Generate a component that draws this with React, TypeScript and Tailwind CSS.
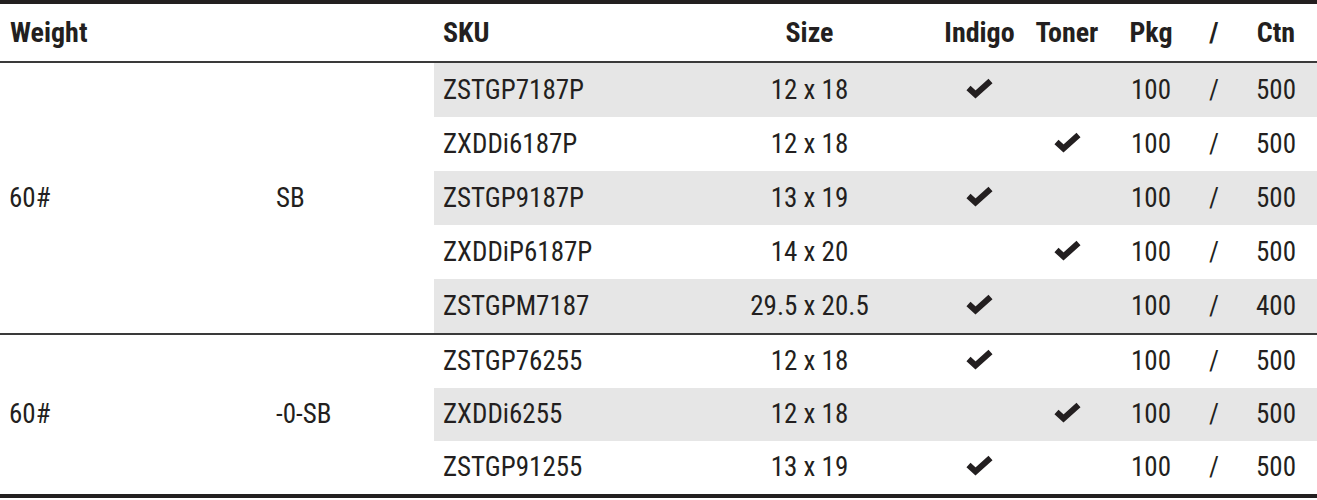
type Row = { sku: string; size: string; indigo: boolean; pkg: string; ctn: string }

const groups: { weight: string; finish: string; rowH: string; rows: Row[] }[] = [
  {
    weight: '60#',
    finish: 'SB',
    rowH: 'h-[54px]',
    rows: [
      { sku: 'ZSTGP7187P', size: '12 x 18', indigo: true, pkg: '100', ctn: '500' },
      { sku: 'ZXDDi6187P', size: '12 x 18', indigo: false, pkg: '100', ctn: '500' },
      { sku: 'ZSTGP9187P', size: '13 x 19', indigo: true, pkg: '100', ctn: '500' },
      { sku: 'ZXDDiP6187P', size: '14 x 20', indigo: false, pkg: '100', ctn: '500' },
      { sku: 'ZSTGPM7187', size: '29.5 x 20.5', indigo: true, pkg: '100', ctn: '400' },
    ],
  },
  {
    weight: '60#',
    finish: '-0-SB',
    rowH: 'h-[53px]',
    rows: [
      { sku: 'ZSTGP76255', size: '12 x 18', indigo: true, pkg: '100', ctn: '500' },
      { sku: 'ZXDDi6255', size: '12 x 18', indigo: false, pkg: '100', ctn: '500' },
      { sku: 'ZSTGP91255', size: '13 x 19', indigo: true, pkg: '100', ctn: '500' },
    ],
  },
]

const cols = 'grid grid-cols-[251px_249px_91px_84px_84px_42px_82px] items-center'

// bold check mark, drawn to match the printed sheet
function Check() {
  return (
    <svg viewBox="0 0 29 23" className="mx-auto -mt-1 block h-[23px] w-[29px]">
      <polyline
        points="3.5,11 10.5,17.5 25.5,4"
        fill="none"
        stroke="#231f20"
        strokeWidth="6"
        strokeLinecap="butt"
        strokeLinejoin="miter"
      />
    </svg>
  )
}

export default function App() {
  return (
    <div
      className="w-[1317px] bg-white text-[#231f20] border-t-4 border-b-4 border-[#231f20]"
      style={{ fontFamily: '"Roboto Condensed", "Liberation Sans Narrow", sans-serif' }}
    >
      <div className="flex h-[59px] items-center text-[28px] font-bold border-b-2 border-[#3a3a3a]">
        <div className="w-[267px] pl-[10px]">Weight</div>
        <div className="w-[167px]" />
        <div className={cols + ' flex-1'}>
          <div className="pl-[9px]">SKU</div>
          <div className="text-center">Size</div>
          <div className="text-center">Indigo</div>
          <div className="text-center">Toner</div>
          <div className="text-center">Pkg</div>
          <div className="text-center">/</div>
          <div className="text-center">Ctn</div>
        </div>
      </div>
      {groups.map((g, gi) => (
        <div
          key={gi}
          className={'flex text-[27px] ' + (gi === 0 ? 'border-b-2 border-[#3a3a3a]' : '')}
        >
          <div className="w-[267px] pl-[9px] flex items-center">{g.weight}</div>
          <div className="w-[167px] pl-[9px] flex items-center">{g.finish}</div>
          <div className="flex-1 flex flex-col">
            {g.rows.map((r, i) => (
              <div key={r.sku} className={cols + ' ' + g.rowH + ' ' + (i % 2 === gi % 2 ? 'bg-[#e6e6e6]' : '')}>
                <div className="pl-[9px]">{r.sku}</div>
                <div className="text-center">{r.size}</div>
                <div>{r.indigo && <Check />}</div>
                <div>{!r.indigo && <Check />}</div>
                <div className="text-center">{r.pkg}</div>
                <div className="text-center">/</div>
                <div className="text-center">{r.ctn}</div>
              </div>
            ))}
          </div>
        </div>
      ))}
    </div>
  )
}
